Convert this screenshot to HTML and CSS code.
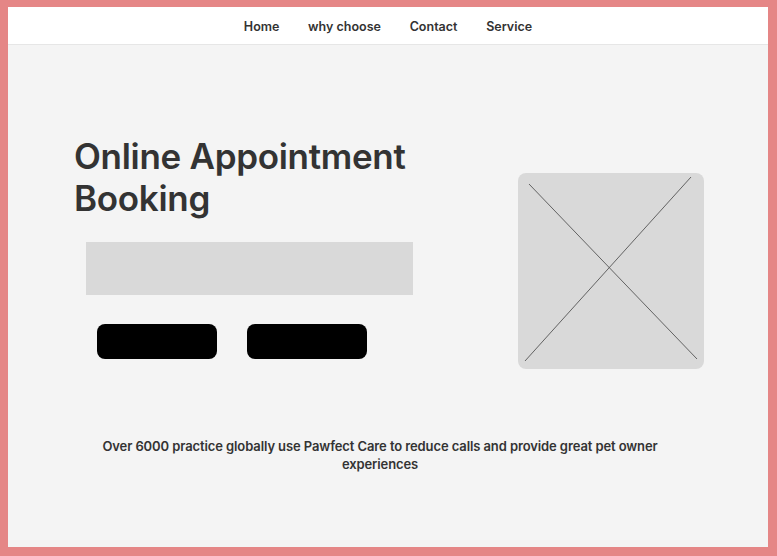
FILE: index.html
```html
<!DOCTYPE html>
<html lang="en">
<head>
<meta charset="utf-8">
<title>Pawfect Care</title>
<link rel="stylesheet" href="styles.css">
</head>
<body>
<div class="frame">
  <nav class="nav">
    <a href="#">Home</a>
    <a href="#">why choose</a>
    <a href="#">Contact</a>
    <a href="#">Service</a>
  </nav>
  <main class="hero">
    <section class="hero-left">
      <h1 class="title">Online Appointment Booking</h1>
      <div class="bar"></div>
      <div class="buttons">
        <button class="btn"></button>
        <button class="btn"></button>
      </div>
    </section>
    <div class="placeholder">
      <svg width="186" height="196" viewBox="0 0 186 196">
        <line x1="11" y1="11" x2="179" y2="186" stroke="#555" stroke-width="0.9"/>
        <line x1="173" y1="4" x2="7" y2="188" stroke="#555" stroke-width="0.9"/>
      </svg>
    </div>
  </main>
  <p class="tagline">Over 6000 practice globally use Pawfect Care to reduce calls and provide great pet owner experiences</p>
</div>
</body>
</html>
```

FILE: styles.css
```css
html {
  background: #e58686;
}
body {
  margin: 7px 9px 9px 8px;
  font-family: Inter, "Noto Sans", sans-serif;
  color: #333;
}
.frame {
  background: #f4f4f4;
  height: 540px;
  overflow: hidden;
}
.nav {
  height: 38px;
  padding-top: 2px;
  box-sizing: border-box;
  background: #fff;
  border-bottom: 1px solid #e6e6e6;
  display: flex;
  justify-content: center;
  align-items: center;
  gap: 28.7px;
}
.nav a {
  color: #333;
  text-decoration: none;
  font-size: 12.5px;
  font-weight: 600;
}
.hero {
  display: flex;
  justify-content: space-between;
  padding: 0 64px 0 66px;
}
.hero-left {
  padding-top: 90px;
}
.title {
  margin: 0;
  width: 360px;
  font-size: 35px;
  line-height: 42px;
  font-weight: 600;
  color: #333;
  letter-spacing: -0.3px;
}
.bar {
  margin: 23px 0 0 12px;
  width: 327px;
  height: 53px;
  background: #d9d9d9;
}
.buttons {
  display: flex;
  gap: 30px;
  margin: 29px 0 0 23px;
}
.btn {
  width: 120px;
  height: 35px;
  border: none;
  border-radius: 8px;
  background: #000;
  padding: 0;
}
.placeholder {
  margin-top: 128px;
  width: 186px;
  height: 196px;
  background: #d9d9d9;
  border-radius: 8px;
  overflow: hidden;
}
.placeholder svg {
  display: block;
}
.tagline {
  margin: 68px 0 0;
  padding: 0 94px 0 78px;
  text-align: center;
  font-size: 13px;
  line-height: 18px;
  font-weight: 600;
  letter-spacing: -0.1px;
  color: #333;
}
```
